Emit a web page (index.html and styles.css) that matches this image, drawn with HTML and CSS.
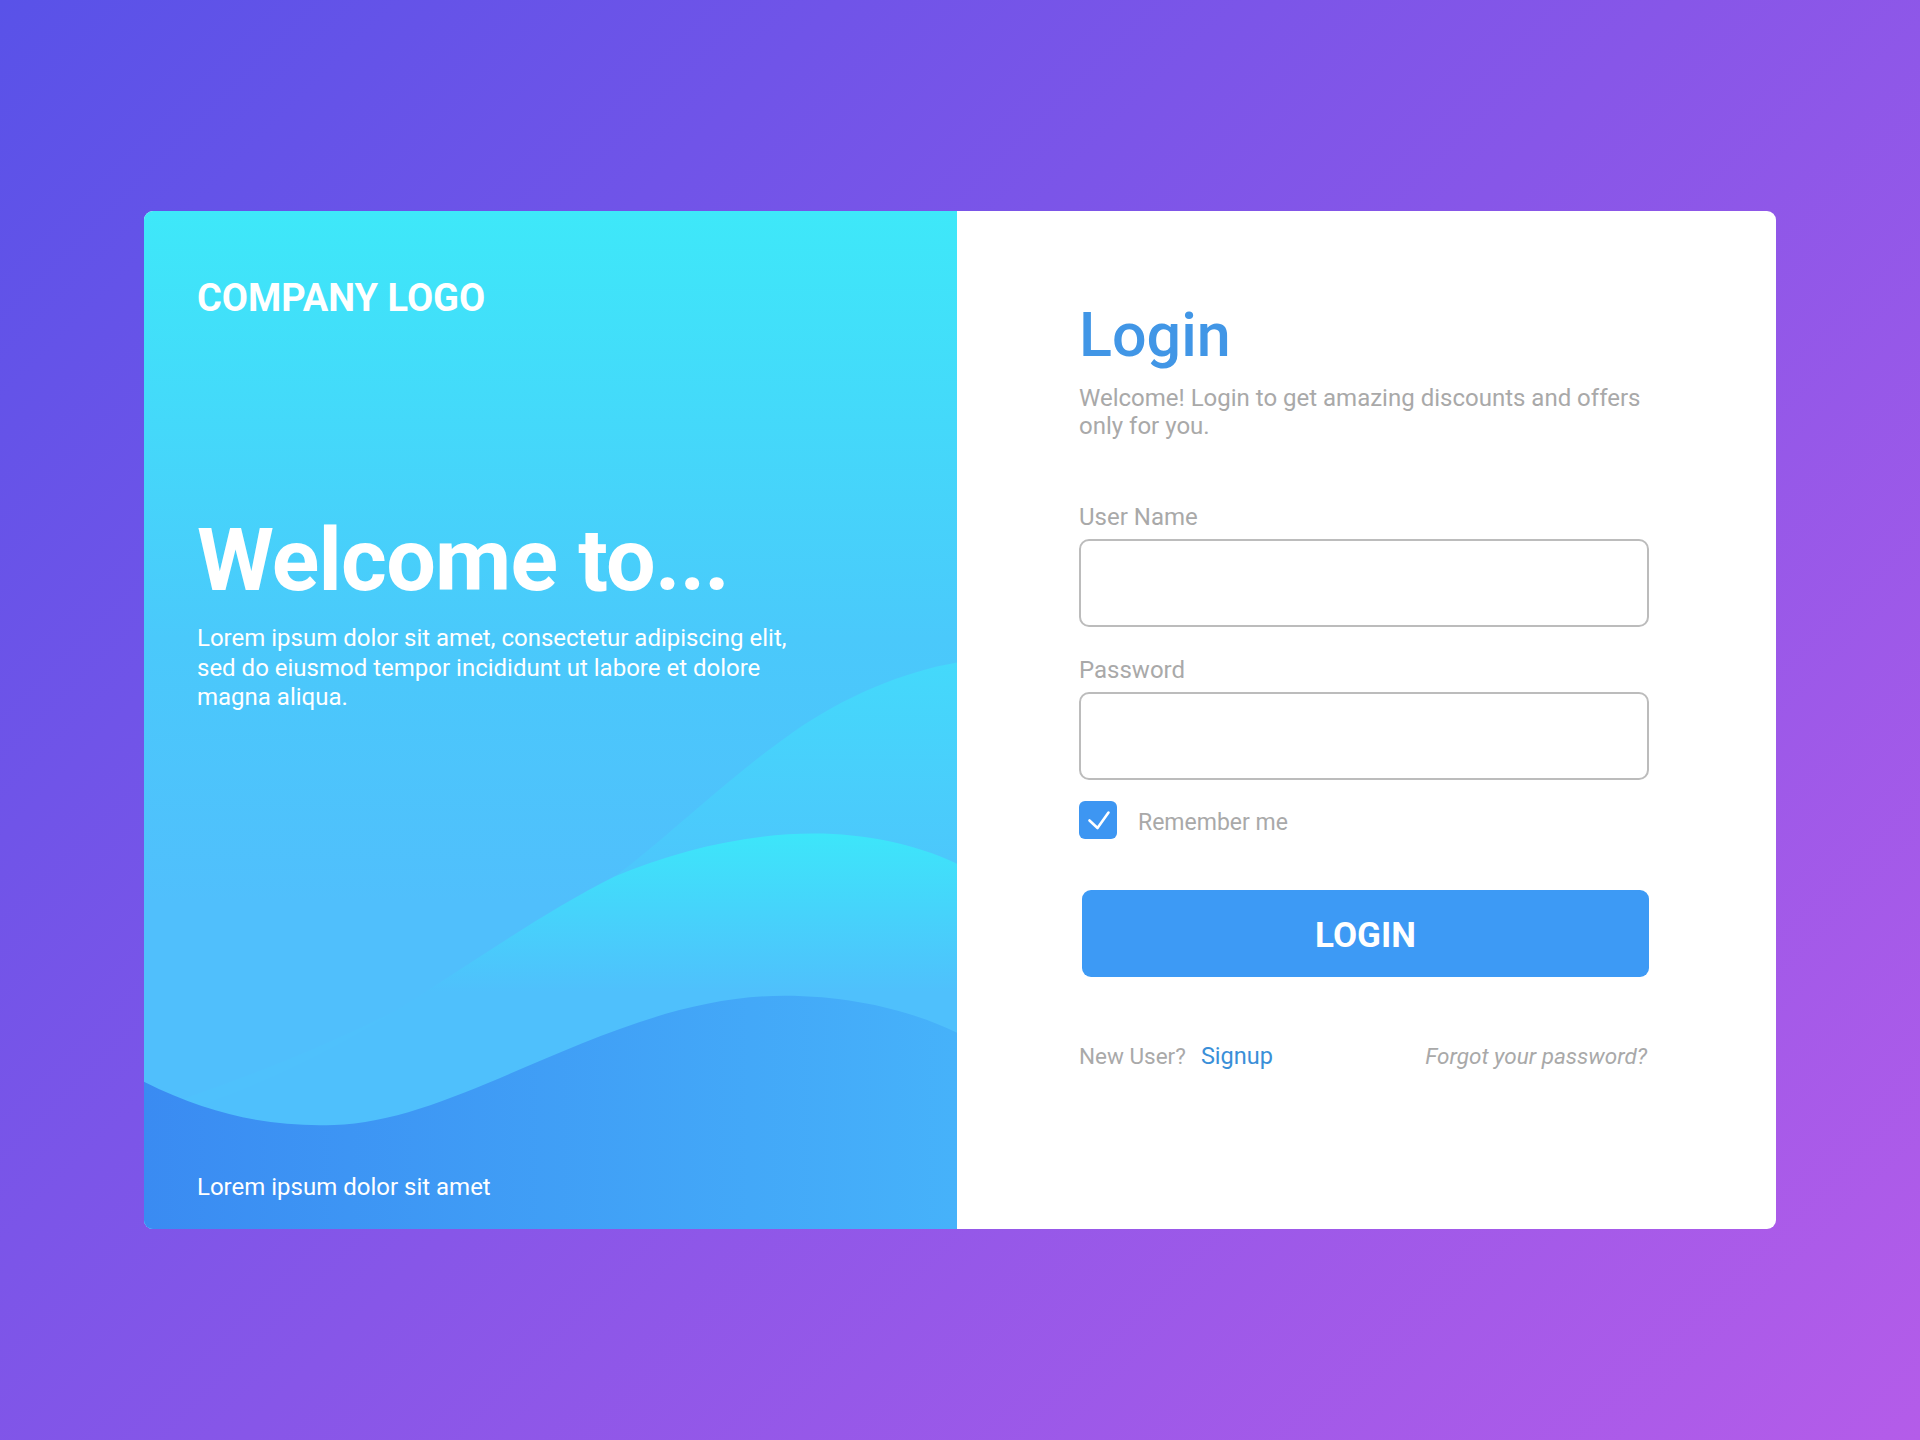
FILE: index.html
```html
<!DOCTYPE html>
<html lang="en">
<head>
<meta charset="utf-8">
<title>Login</title>
<link rel="stylesheet" href="styles.css">
</head>
<body>
<div class="card">
  <section class="hero">
    <svg class="waves" viewBox="0 0 813 1017" preserveAspectRatio="none" aria-hidden="true">
      <defs>
        <linearGradient id="g1" gradientUnits="userSpaceOnUse" x1="0" y1="451" x2="0" y2="720">
          <stop offset="0" stop-color="#44d9fb"/>
          <stop offset="1" stop-color="#4fc1fc"/>
        </linearGradient>
        <linearGradient id="g2" gradientUnits="userSpaceOnUse" x1="0" y1="622" x2="0" y2="780">
          <stop offset="0" stop-color="#3de6fa"/>
          <stop offset="1" stop-color="#4fc0fc"/>
        </linearGradient>
        <linearGradient id="g3" gradientUnits="userSpaceOnUse" x1="0" y1="0" x2="813" y2="0">
          <stop offset="0" stop-color="#3a8bf2"/>
          <stop offset="1" stop-color="#46b2fa"/>
        </linearGradient>
      </defs>
      <path fill="url(#g1)" d="M813,451 C760,460 700,485 650,520 C590,562 540,610 490,650 C400,720 250,820 0,900 L0,1017 L813,1017 Z"/>
      <path fill="url(#g2)" d="M813,652 C770,632 720,622 670,622 C600,622 530,640 470,665 C400,700 330,750 250,800 C170,850 80,890 0,910 L0,1017 L813,1017 Z"/>
      <path fill="url(#g3)" d="M0,870 C70,905 130,915 190,913 C320,910 470,784 640,784 C710,784 770,800 813,821 L813,1017 L0,1017 Z"/>
    </svg>
    <div class="logo">COMPANY LOGO</div>
    <h1 class="hero-title">Welcome to...</h1>
    <p class="hero-text">Lorem ipsum dolor sit amet, consectetur adipiscing elit,<br>sed do eiusmod tempor incididunt ut labore et dolore<br>magna aliqua.</p>
    <p class="hero-foot">Lorem ipsum dolor sit amet</p>
  </section>
  <section class="panel">
    <h2 class="title">Login</h2>
    <p class="subtitle">Welcome! Login to get amazing discounts and offers<br>only for you.</p>
    <label class="label" for="user">User Name</label>
    <input class="field" id="user" type="text">
    <label class="label label-gap" for="pass">Password</label>
    <input class="field" id="pass" type="password">
    <div class="remember">
      <span class="check">
        <svg viewBox="0 0 38 38" width="38" height="38" aria-hidden="true"><path d="M10.5 19.5 L18.5 27 L29.5 11.5" fill="none" stroke="#fff" stroke-width="2.6" stroke-linecap="round" stroke-linejoin="round"/></svg>
      </span>
      <span class="remember-text">Remember me</span>
    </div>
    <button class="btn" type="button">LOGIN</button>
    <div class="links">
      <span class="new">New User?<a class="signup" href="#">Signup</a></span>
      <a class="forgot" href="#">Forgot your password?</a>
    </div>
  </section>
</div>
</body>
</html>
```
FILE: styles.css
```css
html, body {
  margin: 0;
  padding: 0;
}
body {
  width: 1920px;
  height: 1440px;
  background: linear-gradient(135deg, #5952e8 0%, #8756e8 50%, #b45ce9 100%);
  font-family: Roboto, "Liberation Sans", Arial, sans-serif;
  overflow: hidden;
}
.card {
  display: flex;
  width: 1632px;
  height: 1018px;
  margin: 211px auto 0;
  border-radius: 9px;
  overflow: hidden;
  background: #fff;
}
.hero {
  position: relative;
  width: 813px;
  flex: none;
  display: flex;
  flex-direction: column;
  box-sizing: border-box;
  padding: 68px 0 27px 53px;
  background: linear-gradient(180deg, #3ee8f9 0%, #4ac9fb 42%, #50bffc 68%, #50bffc 100%);
  color: #fff;
}
.waves {
  position: absolute;
  left: 0;
  top: 0;
  width: 100%;
  height: 100%;
}
.logo, .hero-title, .hero-text, .hero-foot {
  position: relative;
}
.logo {
  font-size: 38px;
  font-weight: 700;
  line-height: 38px;
}
.hero-title {
  margin: 199px 0 0;
  font-size: 88px;
  font-weight: 700;
  line-height: 88px;
  letter-spacing: -0.8px;
}
.hero-text {
  margin: 20px 0 0;
  font-size: 24px;
  line-height: 29.5px;
}
.hero-foot {
  margin: auto 0 0;
  font-size: 24px;
  line-height: 29px;
}
.panel {
  flex: 1;
  display: flex;
  flex-direction: column;
  align-items: flex-start;
  padding: 93px 0 0 122px;
  color: #a9a9a9;
}
.title {
  margin: 0;
  font-size: 61px;
  font-weight: 500;
  line-height: 62px;
  color: #4196e6;
}
.subtitle {
  margin: 18px 0 0;
  font-size: 24px;
  line-height: 28px;
}
.label {
  margin-top: 63px;
  font-size: 24px;
  line-height: 28px;
}
.label-gap {
  margin-top: 29px;
}
.field {
  box-sizing: border-box;
  width: 570px;
  height: 88px;
  margin: 8px 0 0;
  border: 2.5px solid #bcbcbc;
  border-radius: 10px;
  background: #fff;
  outline: none;
  font: inherit;
}
.remember {
  display: flex;
  align-items: center;
  gap: 21px;
  margin-top: 21px;
}
.check {
  display: block;
  width: 38px;
  height: 38px;
  border-radius: 6px;
  background: #3d96f2;
}
.check svg {
  display: block;
}
.remember-text {
  padding-top: 5px;
  font-size: 23px;
  line-height: 28px;
}
.btn {
  box-sizing: border-box;
  width: 567px;
  height: 87px;
  margin: 51px 0 0 3px;
  border: none;
  border-radius: 9px;
  background: #3d9af5;
  color: #fff;
  font-family: inherit;
  font-size: 35px;
  font-weight: 700;
  padding-top: 4px;
  cursor: pointer;
}
.links {
  display: flex;
  justify-content: space-between;
  width: 568px;
  margin-top: 65px;
  font-size: 22.5px;
  line-height: 28px;
}
.new {
  color: #a9a9a9;
}
.signup {
  margin-left: 15px;
  font-size: 23.5px;
  color: #3a8fd8;
  text-decoration: none;
}
.forgot {
  color: #a9a9a9;
  font-style: italic;
  text-decoration: none;
}
```
